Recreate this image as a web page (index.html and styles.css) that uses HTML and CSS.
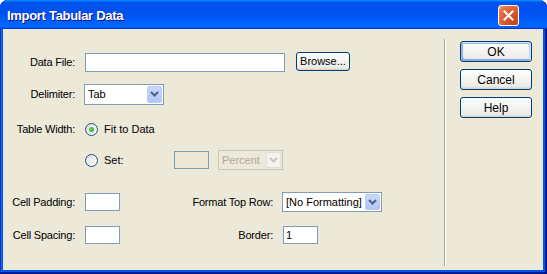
FILE: index.html
```html
<!DOCTYPE html>
<html lang="en">
<head>
  <meta charset="UTF-8" />
  <title>Import Tabular Data</title>
  <link rel="stylesheet" href="styles.css">
</head>
<body>
  <div class="window">
    <div class="titlebar">
      <span class="title">Import Tabular Data</span>
      <span class="close">
        <svg width="11" height="11" viewBox="0 0 11 11"><path d="M1.5 1.5 L9.5 9.5 M9.5 1.5 L1.5 9.5" stroke="#fff" stroke-width="2" stroke-linecap="square"/></svg>
      </span>
    </div>

    <div class="client">
      <div class="form">
        <div class="row r1">
          <span class="lbl">Data File:</span>
          <span class="text file"></span>
          <span class="btn browse">Browse...</span>
        </div>

        <div class="row r2">
          <span class="lbl">Delimiter:</span>
          <span class="combo delim">
            <span class="val">Tab</span>
            <span class="arrow"><svg width="9" height="6" viewBox="0 0 9 6"><path d="M1 1 L4.5 4.5 L8 1" fill="none" stroke="#4d6185" stroke-width="2"/></svg></span>
          </span>
        </div>

        <div class="row r3">
          <span class="lbl">Table Width:</span>
          <span class="radio checked"></span>
          <span class="opt">Fit to Data</span>
        </div>

        <div class="row r4">
          <span class="lbl"></span>
          <span class="radio"></span>
          <span class="opt set">Set:</span>
          <span class="text small off"></span>
          <span class="combo pct off">
            <span class="val">Percent</span>
            <span class="arrow"><svg width="9" height="6" viewBox="0 0 9 6"><path d="M1 1 L4.5 4.5 L8 1" fill="none" stroke="#c9c7ba" stroke-width="2"/></svg></span>
          </span>
        </div>

        <div class="row r5">
          <span class="lbl">Cell Padding:</span>
          <span class="text small"></span>
          <span class="sublbl">Format Top Row:</span>
          <span class="combo fmt">
            <span class="val">[No Formatting]</span>
            <span class="arrow"><svg width="9" height="6" viewBox="0 0 9 6"><path d="M1 1 L4.5 4.5 L8 1" fill="none" stroke="#4d6185" stroke-width="2"/></svg></span>
          </span>
        </div>

        <div class="row r6">
          <span class="lbl">Cell Spacing:</span>
          <span class="text small"></span>
          <span class="sublbl">Border:</span>
          <span class="text small border">1</span>
        </div>
      </div>

      <div class="sep"></div>

      <div class="side">
        <span class="btn default">OK</span>
        <span class="btn">Cancel</span>
        <span class="btn">Help</span>
      </div>
    </div>
  </div>
</body>
</html>
```

FILE: styles.css
```css
body { margin: 0; background: #fff; font-family: "Liberation Sans", Arial, sans-serif; font-size: 11px; color: #000; }

.window {
  width: 547px;
  height: 274px;
  background: #0054e3;
  border-radius: 8px 8px 0 0;
  box-shadow: inset -1px -1px #00138c, inset 1px 0 #0831d9, inset -2px -2px #001ea0, inset 2px 0 #166aee;
  display: flex;
  flex-direction: column;
}

.titlebar {
  height: 29px;
  border-radius: 8px 8px 0 0;
  background: linear-gradient(180deg, #0997ff, #0053ee 8%, #0050ee 40%, #0066ff 88%, #0066ff 93%, #005bff 95%, #003dd7 96%, #003dd7);
  display: flex;
  align-items: center;
  padding: 0 0 0 7px;
}
.title {
  flex: 1;
  color: #fff;
  font-weight: bold;
  font-size: 13px;
  letter-spacing: -0.3px;
  text-shadow: 1px 1px #0f1089;
  padding-top: 1px;
}
.close {
  width: 19px;
  height: 19px;
  margin-right: 28px;
  margin-top: 2px;
  border: 1px solid #fff;
  border-radius: 3px;
  background: radial-gradient(circle at 85% 85%, #c4431c 0, #dc5a30 50%, #e5774f 80%, #f2b39c 100%);
  display: flex;
  align-items: center;
  justify-content: center;
}

.client {
  height: 241px;
  margin: 0 4px 0 3px;
  background: #ece9d8;
  display: flex;
}

.form { width: 441px; padding-top: 23px; }
.row { display: flex; align-items: center; height: 20px; }
.r2 { margin-top: 12px; }
.r3 { margin-top: 15px; }
.r4 { margin-top: 11px; }
.r5 { margin-top: 22px; }
.r6 { margin-top: 13px; }

.lbl { width: 72px; text-align: right; margin-right: 10px; flex: none; letter-spacing: -0.2px; }
.sublbl { width: 153px; text-align: right; margin-right: 9px; flex: none; letter-spacing: -0.2px; }
.r6 .sublbl { margin-right: 10px; }

.text {
  box-sizing: border-box;
  height: 18px;
  border: 1px solid #7f9db9;
  background: #fff;
  padding: 1px 2px;
  line-height: 14px;
  flex: none;
}
.text.file { width: 200px; height: 19px; }
.text.small { width: 35px; }
.text.off { background: #ece9d8; }

.combo {
  box-sizing: border-box;
  height: 20px;
  border: 1px solid #7f9db9;
  background: #fff;
  display: flex;
  align-items: stretch;
  flex: none;
}
.combo .val { flex: 1; padding-left: 3px; line-height: 18px; white-space: nowrap; }
.combo .arrow {
  width: 15px;
  margin: 1px;
  border: 1px solid #b9cbf3;
  border-radius: 2px;
  box-sizing: border-box;
  background: linear-gradient(180deg, #c8d9fd, #b0c6f6);
  display: flex;
  align-items: center;
  justify-content: center;
}
.combo.delim { width: 80px; margin-left: -1px; height: 21px; }
.combo.delim .val { line-height: 19px; }
.combo.fmt { width: 100px; }
.combo.pct { width: 65px; margin-left: 9px; border-color: #c9c7ba; background: #ece9d8; color: #aca899; }
.combo.off .arrow { background: #f4f3ee; border-color: #e2e0d6; }

.radio {
  box-sizing: border-box;
  width: 13px;
  height: 13px;
  border: 1px solid #1d5281;
  border-radius: 50%;
  background: linear-gradient(135deg, #dcdcd7, #fff);
  flex: none;
  display: flex;
  align-items: center;
  justify-content: center;
}
.radio.checked::after {
  content: "";
  width: 5px;
  height: 5px;
  border-radius: 50%;
  background: radial-gradient(circle at 40% 40%, #5fd95b, #21a121);
}
.opt { margin-left: 6px; }
.opt.set { width: 70px; flex: none; }

.btn {
  box-sizing: border-box;
  display: flex;
  align-items: center;
  justify-content: center;
  border: 1px solid #003c74;
  border-radius: 3px;
  background: linear-gradient(180deg, #fff, #ecebe6 86%, #d6d0c5);
  flex: none;
}
.browse { width: 54px; height: 19px; margin-left: 11px; margin-top: -2px; }

.sep {
  width: 0;
  border-left: 1px solid #aca899;
  border-right: 1px solid #fff;
  margin: 10px 0 4px;
}

.side { padding: 12px 0 0 14px; display: flex; flex-direction: column; }
.side .btn { width: 72px; height: 21px; margin-bottom: 7px; font-size: 12px; }
.btn.default {
  box-shadow: inset -1px 1px #cee7ff, inset 1px 2px #98b8ea, inset -2px 2px #bcd4f6, inset 1px -1px #89ade4, inset 2px -2px #89ade4;
}
```
